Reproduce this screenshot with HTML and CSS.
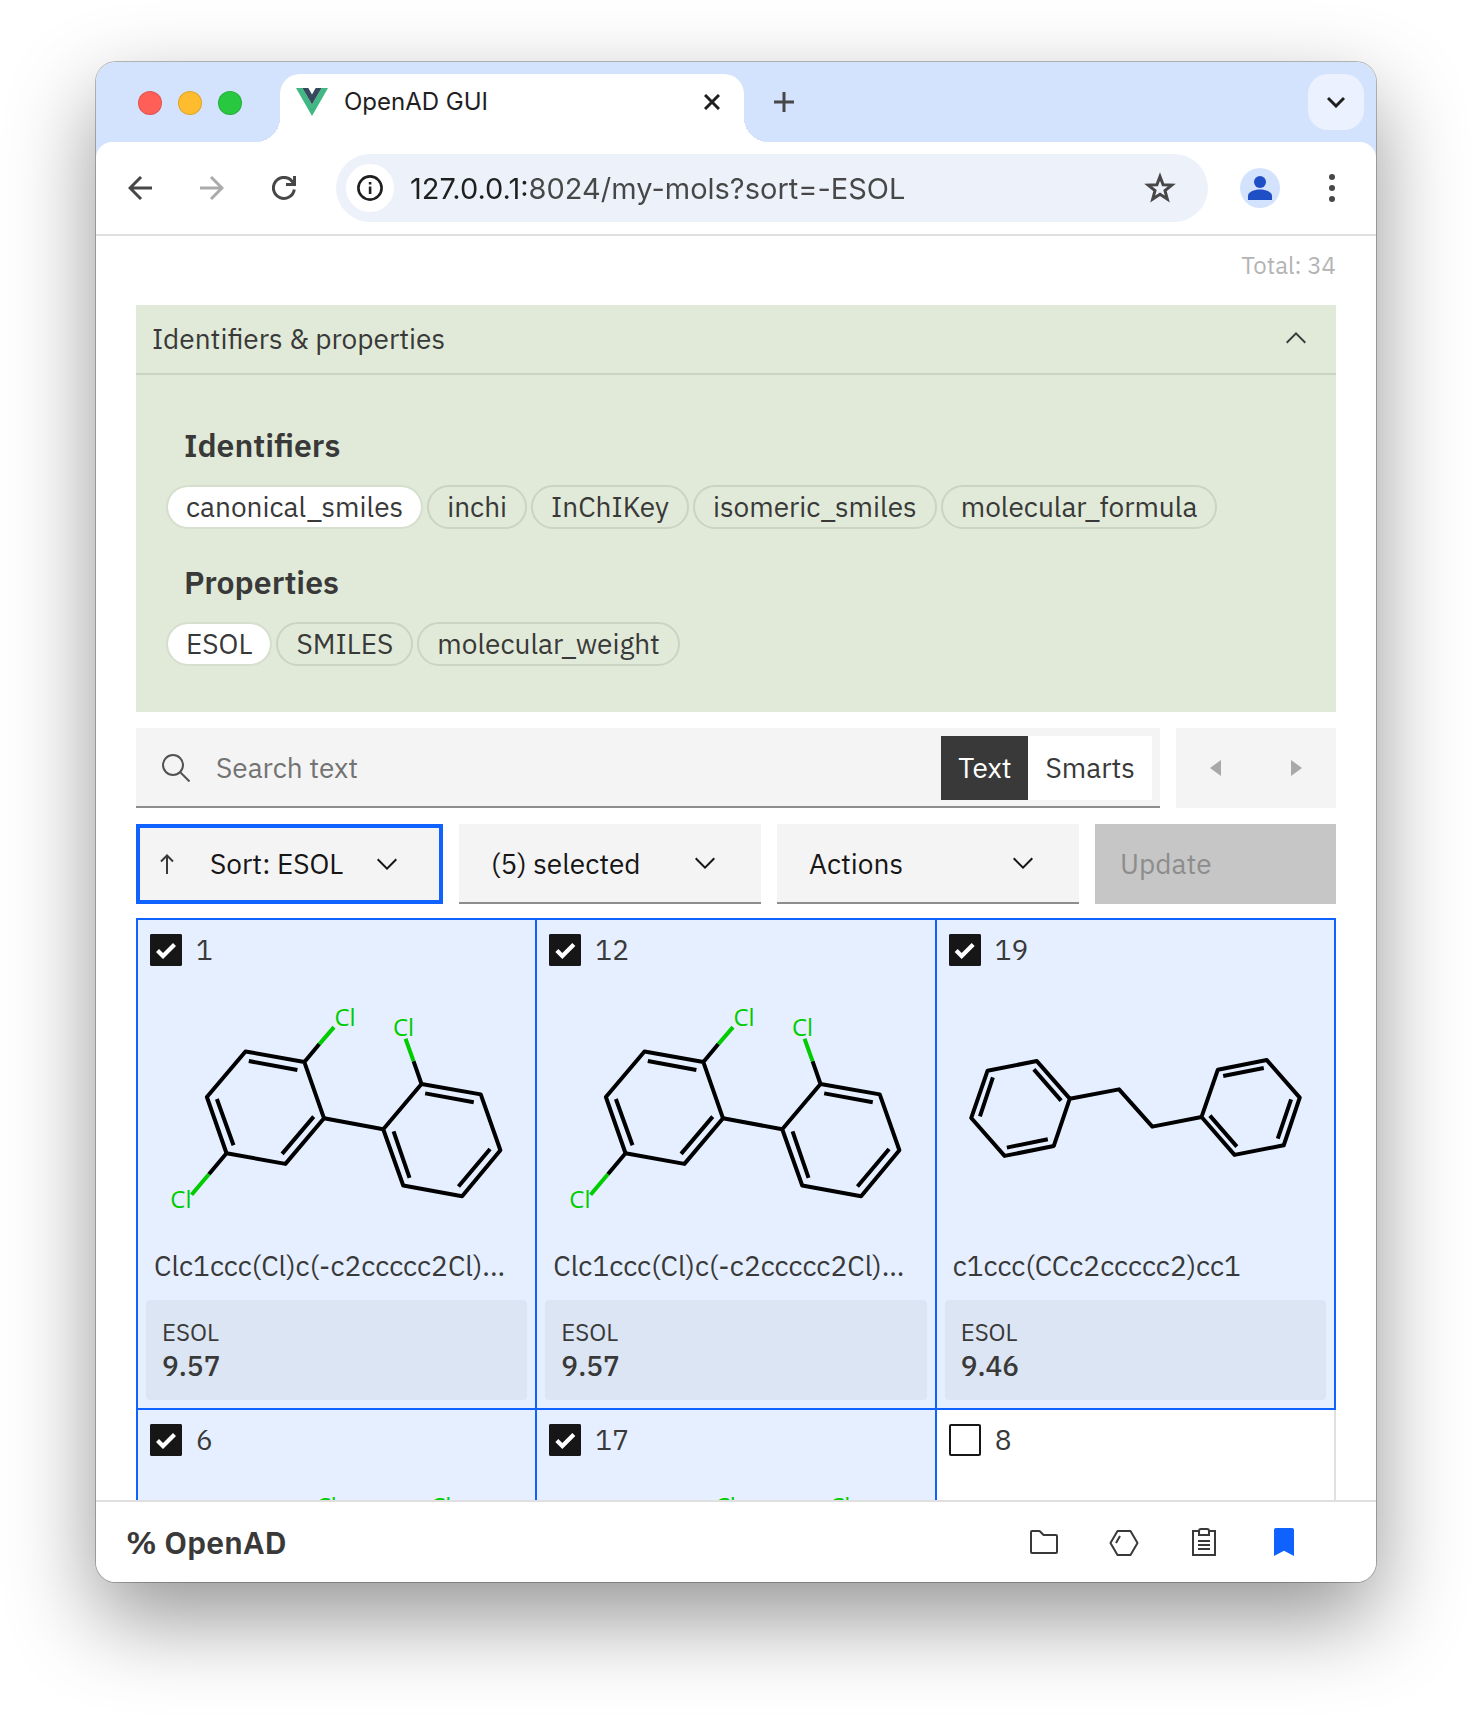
FILE: index.html
```
<!DOCTYPE html>
<html lang="en">
<head>
<meta charset="utf-8">
<meta name="viewport" content="width=device-width, initial-scale=1">
<title>OpenAD GUI</title>
<link rel="stylesheet" href="styles.css">
</head>
<body>
<svg class="defs" aria-hidden="true">
  <symbol id="chevron-down" viewBox="0 0 32 32"><path d="M16 22 6 12l1.4-1.4 8.6 8.6 8.6-8.6L26 12z"/></symbol>
  <symbol id="chevron-up" viewBox="0 0 32 32"><path d="M16 10 26 20l-1.4 1.4-8.6-8.6-8.6 8.6L6 20z"/></symbol>
  <symbol id="trichlorobiphenyl" viewBox="54 0 1194 780">
    <g fill="none" stroke="#000" stroke-width="12" stroke-linejoin="round">
      <path d="M599 222 554 276 377 244 261 381 320 550 497 582 613 445 554 276"/>
      <path d="M533 300 387 273M291 387 341 526M487 552 582 440"/>
      <path d="M320 550 267 613M613 445 791 478"/>
      <path d="M882 273 906 342 1084 373 1143 541 1028 679 851 647 791 478 906 342"/>
      <path d="M917 370 1063 397M1112 537 1017 650M870 624 822 484"/>
      <path stroke="#00cc00" d="M599 222 643 171M267 613 215 675M882 273 858 206"/>
    </g>
    <g class="atom"><text x="676" y="167">Cl</text><text x="852" y="199">Cl</text><text x="183" y="714">Cl</text></g>
  </symbol>
  <symbol id="bibenzyl" viewBox="51 210 1194 780">
    <g fill="none" stroke="#000" stroke-width="12" stroke-linejoin="round">
      <path d="M450 596 351 483 203 512 154 654 254 768 402 738 450 596 598 568 698 680 846 651 895 509 1042 480 1141 593 1093 736 945 765 846 651"/>
      <path d="M424 602 342 508M219 532 180 649M261 743 384 718M911 528 1033 504M1115 598 1075 716M952 740 871 647"/>
    </g>
  </symbol>
  <symbol id="tetrachlorobiphenyl" viewBox="54 0 1194 780">
    <g class="atom"><text x="620" y="164">Cl</text><text x="964" y="164">Cl</text></g>
  </symbol>
</svg>

<div class="window">
  <header class="chrome">
    <div class="tabstrip">
      <div class="lights"><i class="light red"></i><i class="light yellow"></i><i class="light green"></i></div>
      <div class="tab">
        <svg width="32" height="28" viewBox="0 0 32 28" aria-hidden="true"><path fill="#41b883" d="M0 0h6.4L16 16.5 25.6 0H32L16 28z"/><path fill="#35495e" d="M6.4 0h5.9L16 6.4 19.700 0h5.900L16 16.600z"/></svg>
        <span class="tab-title">OpenAD GUI</span>
        <button class="plain" aria-label="Close tab"><svg width="16" height="16" viewBox="0 0 16 16" fill="none" stroke="#1f1f1f" stroke-width="3"><path d="m1 1 14 14M15 1 1 15"/></svg></button>
      </div>
      <button class="plain new-tab" aria-label="New tab"><svg width="20" height="20" viewBox="0 0 20 20" fill="none" stroke="#474747" stroke-width="3"><path d="M10 0v20M0 10h20"/></svg></button>
      <button class="plain tab-search" aria-label="Search tabs"><svg width="18" height="12" viewBox="0 0 18 12" fill="none" stroke="#1f1f1f" stroke-width="3"><path d="m1 2 8 8 8-8"/></svg></button>
    </div>
    <div class="toolbar">
      <div class="nav">
        <button class="plain" aria-label="Back"><svg width="24" height="24" viewBox="0 0 24 24" fill="none" stroke="#474747" stroke-width="3"><path d="M24 12H2M13 1 2 12l11 11"/></svg></button>
        <button class="plain" aria-label="Forward"><svg width="24" height="24" viewBox="0 0 24 24" fill="none" stroke="#ababab" stroke-width="3"><path d="M0 12h22M11 1l11 11-11 11"/></svg></button>
        <button class="plain" aria-label="Reload"><svg width="24" height="24" viewBox="0 0 24 24" fill="none" stroke="#474747" stroke-width="3"><path d="M22.300 13.500A10.500 10.500 0 1 1 20 5.200L22 8"/><path d="M22.500 0v8.500H14"/></svg></button>
      </div>
      <div class="omnibox">
        <button class="plain site-info" aria-label="Site information"><svg width="26" height="26" viewBox="0 0 26 26"><circle cx="13" cy="13" r="11.600" fill="none" stroke="#1f1f1f" stroke-width="2.600"/><path d="M11.800 11.500h2.600V19h-2.600zM11.800 7h2.600v2.600h-2.600z" fill="#1f1f1f"/></svg></button>
        <input class="url" aria-label="Address" value="127.0.0.1:8024/my-mols?sort=-ESOL">
        <button class="plain" aria-label="Bookmark this tab"><svg width="32" height="32" viewBox="0 0 32 32" fill="none" stroke="#474747" stroke-width="3"><path d="m16 4.500 3.100 8.200 8.700.4-6.800 5.500 2.300 8.500L16 22.300l-7.300 4.800 2.300-8.500-6.800-5.500 8.700-.4z"/></svg></button>
      </div>
      <button class="plain avatar" aria-label="Profile"><svg width="24" height="24" viewBox="0 0 24 24" fill="#1f4fc4"><circle cx="12" cy="6" r="6"/><path d="M0 24v-4c0-4 6-6.500 12-6.500S24 16 24 20v4z"/></svg></button>
      <button class="plain more" aria-label="Menu"><svg width="24" height="30" viewBox="0 0 24 30" fill="#474747"><circle cx="12" cy="4" r="3"/><circle cx="12" cy="15" r="3"/><circle cx="12" cy="26" r="3"/></svg></button>
    </div>
  </header>

  <main class="page">
    <p class="total">Total: 34</p>

    <section class="panel">
      <button class="panel-head" aria-expanded="true"><span class="panel-title">Identifiers &amp; properties</span><svg width="32" height="32" fill="#393939"><use href="#chevron-up"/></svg></button>
      <div class="panel-body">
        <div class="group">
          <h2 class="group-title">Identifiers</h2>
          <div class="pills">
            <button class="pill on">canonical_smiles</button><button class="pill">inchi</button><button class="pill">InChIKey</button><button class="pill">isomeric_smiles</button><button class="pill">molecular_formula</button>
          </div>
        </div>
        <div class="group">
          <h2 class="group-title">Properties</h2>
          <div class="pills">
            <button class="pill on">ESOL</button><button class="pill">SMILES</button><button class="pill">molecular_weight</button>
          </div>
        </div>
      </div>
    </section>

    <div class="search-row">
      <div class="search">
        <svg width="28" height="28" viewBox="0 0 28 28" fill="none" stroke="#525252" stroke-width="2" aria-hidden="true"><circle cx="11" cy="11" r="10"/><path d="m18 18 9.500 9.500"/></svg>
        <input class="search-input" type="text" aria-label="Search text" placeholder="Search text">
        <div class="toggle"><button class="toggle-btn on" aria-pressed="true">Text</button><button class="toggle-btn" aria-pressed="false">Smarts</button></div>
      </div>
      <div class="pager">
        <button class="plain" aria-label="Previous page"><svg width="12" height="16" viewBox="0 0 12 16" fill="#a8a8a8"><path d="M11 0v16L0 8z"/></svg></button>
        <button class="plain" aria-label="Next page"><svg width="12" height="16" viewBox="0 0 12 16" fill="#a8a8a8"><path d="M1 0v16l11-8z"/></svg></button>
      </div>
    </div>

    <div class="action-row">
      <div class="dropdown sort">
        <button class="plain sort-dir" aria-label="Sort direction"><svg width="14" height="20" viewBox="0 0 14 20" fill="none" stroke="#393939" stroke-width="2"><path d="M7 20V2M1 7.500 7 1.500l6 6"/></svg></button>
        <select class="select" aria-label="Sort"><option>Sort: ESOL</option></select>
        <svg class="caret" width="32" height="32"><use href="#chevron-down"/></svg>
      </div>
      <div class="dropdown">
        <select class="select" aria-label="Selection"><option>(5) selected</option></select>
        <svg class="caret" width="32" height="32"><use href="#chevron-down"/></svg>
      </div>
      <div class="dropdown">
        <select class="select" aria-label="Actions"><option>Actions</option></select>
        <svg class="caret" width="32" height="32"><use href="#chevron-down"/></svg>
      </div>
      <button class="update" disabled>Update</button>
    </div>

    <div class="mols">
      <article class="mol selected">
        <label class="mol-head"><input class="check" type="checkbox" checked>1</label>
        <svg class="drawing"><use href="#trichlorobiphenyl"/></svg>
        <p class="smiles">Clc1ccc(Cl)c(-c2ccccc2Cl)...</p>
        <dl class="prop"><dt>ESOL</dt><dd>9.57</dd></dl>
      </article>
      <article class="mol selected">
        <label class="mol-head"><input class="check" type="checkbox" checked>12</label>
        <svg class="drawing"><use href="#trichlorobiphenyl"/></svg>
        <p class="smiles">Clc1ccc(Cl)c(-c2ccccc2Cl)...</p>
        <dl class="prop"><dt>ESOL</dt><dd>9.57</dd></dl>
      </article>
      <article class="mol selected">
        <label class="mol-head"><input class="check" type="checkbox" checked>19</label>
        <svg class="drawing"><use href="#bibenzyl"/></svg>
        <p class="smiles">c1ccc(CCc2ccccc2)cc1</p>
        <dl class="prop"><dt>ESOL</dt><dd>9.46</dd></dl>
      </article>
      <article class="mol selected">
        <label class="mol-head"><input class="check" type="checkbox" checked>6</label>
        <svg class="drawing"><use href="#tetrachlorobiphenyl"/></svg>
      </article>
      <article class="mol selected">
        <label class="mol-head"><input class="check" type="checkbox" checked>17</label>
        <svg class="drawing"><use href="#tetrachlorobiphenyl"/></svg>
      </article>
      <article class="mol">
        <label class="mol-head"><input class="check" type="checkbox">8</label>
      </article>
    </div>
  </main>

  <footer class="footer">
    <a class="brand" href="#">% OpenAD</a>
    <nav class="footer-nav">
      <a href="#files" aria-label="Files"><svg width="32" height="32" viewBox="0 0 32 32" fill="#393939"><path d="M11.170 6l3.420 3.410.58.590H28v16H4V6h7.170m0-2H4a2 2 0 0 0-2 2v20a2 2 0 0 0 2 2h24a2 2 0 0 0 2-2V10a2 2 0 0 0-2-2H16l-3.410-3.410A2 2 0 0 0 11.170 4Z"/></svg></a>
      <a href="#molecules" aria-label="Molecules"><svg width="32" height="32" viewBox="0 0 32 32" fill="none" stroke="#393939" stroke-width="2" stroke-linejoin="round"><path d="M2.500 17l7-12h13l7 12-7 12h-13zM8 17l4-7"/></svg></a>
      <a href="#results" aria-label="Results"><svg width="32" height="32" viewBox="0 0 32 32" fill="none" stroke="#393939" stroke-width="2"><path d="M11 5H5v24h22V5h-6M10 15h12M10 19h12M10 23h12"/><path d="M11 9V5a2 2 0 0 1 2-2h6a2 2 0 0 1 2 2v4z"/></svg></a>
      <a href="#my-mols" aria-label="My molecules"><svg width="32" height="32" viewBox="0 0 32 32" fill="#0f62fe"><path d="M8 2h16a2 2 0 0 1 2 2v26l-10-5.200L6 30V4a2 2 0 0 1 2-2z"/></svg></a>
    </nav>
  </footer>
</div>
</body>
</html>
```
FILE: styles.css
```
*, *::before, *::after { box-sizing: border-box; }

:root {
  --ui: "IBM Plex Sans", "Open Sans", "Noto Sans", sans-serif;
  --chrome: Inter, "Liberation Sans", sans-serif;
  --text: #393939;
  --blue: #0f62fe;
  --field: #f4f4f4;
  --line: #8d8d8d;
}

body {
  margin: 0;
  height: 100vh;
  padding: 62px 96px 134px;
  background: #fff;
  color: var(--text);
  font: 28px/40px var(--ui);
}

button, input, select { margin: 0; border: 0; border-radius: 0; font: inherit; color: inherit; }
h2, p, dl, dd { margin: 0; }
svg { display: block; flex: none; }
.defs { display: none; }
.plain { display: grid; place-items: center; padding: 0; background: none; flex: none; }

.window {
  display: flex;
  flex-direction: column;
  height: 100%;
  overflow: hidden;
  border-radius: 20px;
  background: #fff;
  box-shadow: 0 0 0 1px rgba(0, 0, 0, .25), 0 36px 88px rgba(0, 0, 0, .42);
}

/* Browser chrome */
.chrome { background: #d3e3fd; border-bottom: 2px solid #e0e0e0; font-family: var(--chrome); }
.tabstrip { display: flex; align-items: center; height: 80px; padding: 12px 12px 0 42px; }
.lights { display: flex; gap: 16px; width: 142px; margin-top: -10px; }
.light { width: 24px; height: 24px; border-radius: 50%; border: 1px solid rgba(0, 0, 0, .12); }
.red { background: #ff5f57; }
.yellow { background: #febc2e; }
.green { background: #28c840; }

.tab {
  position: relative;
  display: flex;
  align-items: center;
  gap: 16px;
  flex: 0 1 464px;
  height: 68px;
  padding: 0 24px 12px 16px;
  border-radius: 20px 20px 0 0;
  background: #fff;
  color: #1f1f1f;
  font-size: 24px;
}
.tab::before, .tab::after { content: ""; position: absolute; bottom: 0; width: 24px; height: 24px; }
.tab::before { right: 100%; background: radial-gradient(circle at 0 0, transparent 24px, #fff 24px); }
.tab::after { left: 100%; background: radial-gradient(circle at 100% 0, transparent 24px, #fff 24px); }
.tab-title { flex: 1; }
.new-tab { margin: 0 auto 12px 30px; }
.tab-search { width: 56px; height: 56px; margin-bottom: 12px; border-radius: 20px; background: #ebf1ff; }

.toolbar {
  display: flex;
  align-items: center;
  height: 92px;
  padding: 0 32px;
  border-radius: 16px 16px 0 0;
  background: #fff;
}
.nav { display: flex; gap: 48px; margin-right: 40px; }
.omnibox {
  display: flex;
  align-items: center;
  gap: 16px;
  flex: 1;
  height: 68px;
  padding: 0 32px 0 10px;
  border-radius: 34px;
  background: #edf2fa;
}
.site-info { width: 48px; height: 48px; border-radius: 50%; background: #fff; }
/* The host is darker than the rest of the address */
.url {
  flex: 1;
  min-width: 0;
  height: 48px;
  padding: 0;
  background: linear-gradient(90deg, #1f1f1f 120px, #474747 120px);
  background-clip: text;
  -webkit-text-fill-color: transparent;
  font-size: 29px;
}
.avatar { width: 40px; height: 40px; margin: 0 40px 0 32px; border-radius: 50%; background: #d3e3fd; }

/* Page */
.page { flex: 1; min-height: 0; overflow: hidden; padding: 0 40px; }
.total { padding: 13px 0 24px; color: #b4b4b4; font-size: 24px; line-height: 32px; text-align: right; }

.panel { margin-bottom: 16px; background: #e1ead8; }
.panel-head {
  display: flex;
  align-items: center;
  justify-content: space-between;
  width: 100%;
  height: 70px;
  padding: 0 24px 2px 16px;
  border-bottom: 2px solid #cbd3c2;
  background: none;
}
.panel-title { padding-top: 2px; }
.panel-body { display: grid; gap: 33px; padding: 50px 30px 46px; }
.group { display: grid; gap: 20px; }
.group-title { padding-left: 18px; font-size: 32px; font-weight: 600; line-height: 40px; }
.pills { display: flex; flex-wrap: wrap; gap: 4px; }
.pill { height: 44px; padding: 0 18px; border: 2px solid #cbd3c2; border-radius: 22px; background: none; line-height: 40px; }
.pill.on { border-color: #d6dfcd; background: #fff; background-clip: padding-box; }

.search-row { display: grid; grid-template-columns: 1fr 160px; gap: 16px; margin-bottom: 16px; }
.search {
  display: flex;
  align-items: center;
  height: 80px;
  padding: 2px 8px 0 26px;
  border-bottom: 2px solid var(--line);
  background: var(--field);
}
.search-input { flex: 1; min-width: 0; height: 64px; padding: 0 26px 2px; background: none; }
.search-input::placeholder { color: #737373; opacity: 1; }
.toggle { display: flex; height: 64px; background: #fff; }
.toggle-btn { padding: 0 17px; background: #fff; }
.toggle-btn.on { background: #393939; color: #fff; }
.pager { display: grid; grid-template-columns: 1fr 1fr; background: var(--field); }

.action-row { display: grid; grid-template-columns: 307fr 302fr 302fr 241fr; gap: 16px; margin-bottom: 14px; }
.dropdown {
  display: grid;
  grid-template-columns: 1fr 72px;
  align-items: center;
  height: 80px;
  border-bottom: 2px solid var(--line);
  background: var(--field);
  color: #161616;
}
.select { grid-area: 1 / 1 / 2 / 3; height: 100%; padding: 2px 72px 0 32px; appearance: none; background: none; }
.caret { grid-area: 1 / 2; fill: #161616; pointer-events: none; }
.sort { grid-template-columns: 54px 1fr 68px; border: 4px solid var(--blue); }
.sort-dir { grid-area: 1 / 1; }
.sort .select { grid-area: 1 / 2 / 2 / 4; padding: 0 68px 0 16px; }
.sort .caret { grid-area: 1 / 3; }
.update { padding: 0 25px; background: #c6c6c6; color: var(--line); text-align: left; }

/* Neighbouring cells share one border */
.mols { display: grid; grid-template-columns: repeat(3, 1fr); padding-right: 2px; }
.mol { height: 492px; margin: 0 -2px -2px 0; padding: 14px 0 8px; border: 2px solid #e0e0e0; }
.mol.selected { position: relative; border-color: var(--blue); background: #e5efff; }
.mol-head { display: flex; align-items: center; gap: 14px; height: 32px; padding-left: 12px; }
.check { display: block; width: 32px; height: 32px; border-radius: 2px; appearance: none; box-shadow: inset 0 0 0 2px #161616; }
.check:checked { background: #161616; }
.check:checked::before {
  content: "";
  display: block;
  width: 32px;
  height: 32px;
  background: #fff;
  clip-path: polygon(6px 18px, 9px 15px, 13px 19px, 23px 9px, 26px 12px, 13px 25px);
}
.drawing { width: 100%; height: 260px; margin-top: 4px; }
.atom { fill: #00cc00; font: 72px/1 "Open Sans", sans-serif; text-anchor: middle; }
.smiles { margin: 16px 0 14px; padding: 0 16px; overflow: hidden; white-space: nowrap; }
.prop { margin: 0 8px; padding: 15px 16px 17px; border-radius: 4px; background: #dce5f3; line-height: 34px; }
.prop dt { font-size: 24px; }
.prop dd { font-weight: 500; }

.footer {
  display: flex;
  align-items: center;
  justify-content: space-between;
  height: 82px;
  padding: 0 76px 0 30px;
  border-top: 2px solid #e0e0e0;
  background: #fff;
}
.brand { color: inherit; font-size: 32px; font-weight: 600; text-decoration: none; }
.footer-nav { display: flex; gap: 48px; }
```
